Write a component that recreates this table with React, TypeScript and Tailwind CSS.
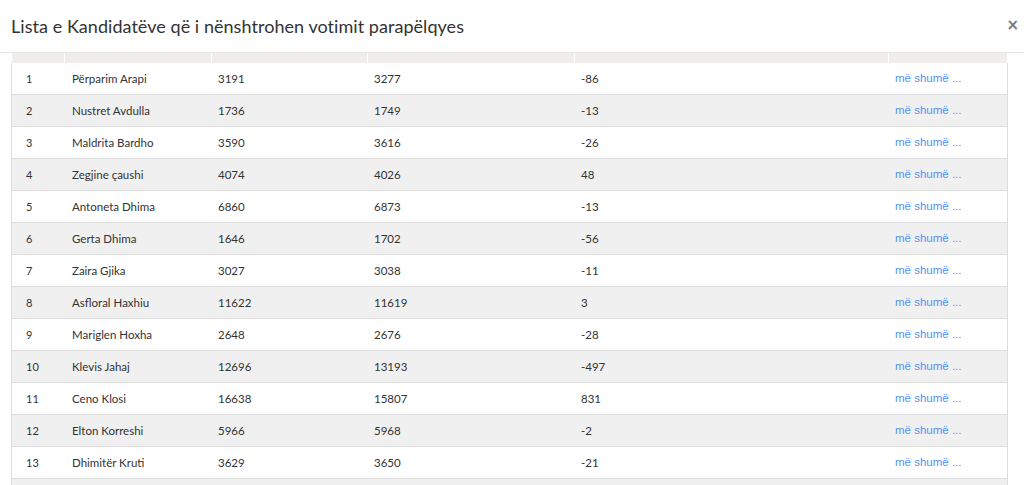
import React from "react";

const rows: [number, string, string, string, string][] = [
  [1, "Përparim Arapi", "3191", "3277", "-86"],
  [2, "Nustret Avdulla", "1736", "1749", "-13"],
  [3, "Maldrita Bardho", "3590", "3616", "-26"],
  [4, "Zegjine çaushi", "4074", "4026", "48"],
  [5, "Antoneta Dhima", "6860", "6873", "-13"],
  [6, "Gerta Dhima", "1646", "1702", "-56"],
  [7, "Zaira Gjika", "3027", "3038", "-11"],
  [8, "Asfloral Haxhiu", "11622", "11619", "3"],
  [9, "Mariglen Hoxha", "2648", "2676", "-28"],
  [10, "Klevis Jahaj", "12696", "13193", "-497"],
  [11, "Ceno Klosi", "16638", "15807", "831"],
  [12, "Elton Korreshi", "5966", "5968", "-2"],
  [13, "Dhimitër Kruti", "3629", "3650", "-21"],
  [14, "", "", "", ""],
];

const cols = "grid grid-cols-[52px_147px_156px_207px_314px_119px]";

export default function App() {
  return (
    <div
      className="w-[1024px] h-[485px] overflow-hidden bg-white text-[#333]"
      style={{ fontFamily: "Lato, 'Open Sans', sans-serif" }}
    >
      <div className="h-[53px] flex items-center justify-between pl-[11px] pr-[5px] border-b border-[#e5e5e5]">
        <h4 className="text-[18px] leading-none font-normal text-[#333] tracking-[0.05px]">
          Lista e Kandidatëve që i nënshtrohen votimit parapëlqyes
        </h4>
        <span className="text-[15px] font-bold text-[#777] leading-none mt-[-2px]" style={{ fontFamily: "'DejaVu Sans', sans-serif" }}>
          ×
        </span>
      </div>
      <div className="pl-[11px] w-[1008px]">
        <div className="px-px">
          <div className={`${cols} h-[10px] bg-[#efeeed]`}>
            <div />
            <div className="border-l border-white" />
            <div className="border-l border-white" />
            <div className="border-l border-white" />
            <div className="border-l border-white" />
            <div className="border-l border-white" />
          </div>
        </div>
        {rows.map((r, i) => (
          <div
            key={i}
            className={`${cols} h-[32px] border-l border-r border-b border-[#dddddd] items-center text-[11.5px] pt-px ${
              i % 2 === 1 ? "bg-[#f0f0f0]" : "bg-white"
            }`}
          >
            <div className="pl-[14px] text-[11px]">{r[1] ? r[0] : ""}</div>
            <div className="pl-[8px]">{r[1]}</div>
            <div className="pl-[7px]">{r[2]}</div>
            <div className="pl-[7px]">{r[3]}</div>
            <div className="pl-[7px]">{r[4]}</div>
            <div
              className="pl-[7px] text-[11.5px] text-[#4f94ef]"
              style={{ fontFamily: "'Liberation Sans', Arial, sans-serif" }}
            >
              {r[1] ? "më shumë ..." : ""}
            </div>
          </div>
        ))}
      </div>
    </div>
  );
}
